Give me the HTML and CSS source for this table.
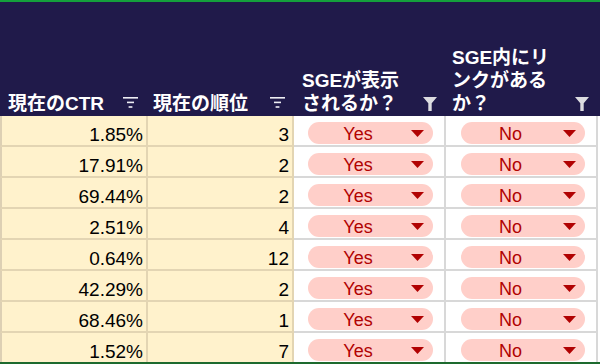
FILE: index.html
```html
<!DOCTYPE html>
<html lang="ja">
<head>
<meta charset="utf-8">
<link rel="stylesheet" href="styles.css">
</head>
<body>
<div class="topbar"></div>
<div class="sheet">
  <div class="head">
    <div class="hcell h1"><span class="htext">現在のCTR</span><svg class="sorticon" width="15" height="11" viewBox="0 0 15 11"><rect x="0" y="0" width="15" height="1.6"/><rect x="4" y="4.6" width="7" height="1.6"/><rect x="5.6" y="9.2" width="3.8" height="1.6"/></svg></div>
    <div class="hcell h2"><span class="htext">現在の順位</span><svg class="sorticon" width="15" height="11" viewBox="0 0 15 11"><rect x="0" y="0" width="15" height="1.6"/><rect x="4" y="4.6" width="7" height="1.6"/><rect x="5.6" y="9.2" width="3.8" height="1.6"/></svg></div>
    <div class="hcell h3"><span class="htext">SGEが表示<br>されるか？</span><svg class="funnel" width="14" height="14" viewBox="0 0 14 14"><path d="M0 0H14L8.7 6.3V14H5.3V6.3Z"/></svg></div>
    <div class="hcell h4"><span class="htext">SGE内にリ<br>ンクがある<br>か？</span><svg class="funnel" width="14" height="14" viewBox="0 0 14 14"><path d="M0 0H14L8.7 6.3V14H5.3V6.3Z"/></svg></div>
  </div>
  <div class="rows">
    <div class="row"><div class="c num first">1.85%</div><div class="c num">3</div><div class="c sel"><div class="pill"><span class="pt">Yes</span><svg class="arr" width="13" height="7" viewBox="0 0 13 7"><path d="M0 0H13L6.5 7Z"/></svg></div></div><div class="c sel"><div class="pill"><span class="pt">No</span><svg class="arr" width="13" height="7" viewBox="0 0 13 7"><path d="M0 0H13L6.5 7Z"/></svg></div></div></div>
    <div class="row"><div class="c num first">17.91%</div><div class="c num">2</div><div class="c sel"><div class="pill"><span class="pt">Yes</span><svg class="arr" width="13" height="7" viewBox="0 0 13 7"><path d="M0 0H13L6.5 7Z"/></svg></div></div><div class="c sel"><div class="pill"><span class="pt">No</span><svg class="arr" width="13" height="7" viewBox="0 0 13 7"><path d="M0 0H13L6.5 7Z"/></svg></div></div></div>
    <div class="row"><div class="c num first">69.44%</div><div class="c num">2</div><div class="c sel"><div class="pill"><span class="pt">Yes</span><svg class="arr" width="13" height="7" viewBox="0 0 13 7"><path d="M0 0H13L6.5 7Z"/></svg></div></div><div class="c sel"><div class="pill"><span class="pt">No</span><svg class="arr" width="13" height="7" viewBox="0 0 13 7"><path d="M0 0H13L6.5 7Z"/></svg></div></div></div>
    <div class="row"><div class="c num first">2.51%</div><div class="c num">4</div><div class="c sel"><div class="pill"><span class="pt">Yes</span><svg class="arr" width="13" height="7" viewBox="0 0 13 7"><path d="M0 0H13L6.5 7Z"/></svg></div></div><div class="c sel"><div class="pill"><span class="pt">No</span><svg class="arr" width="13" height="7" viewBox="0 0 13 7"><path d="M0 0H13L6.5 7Z"/></svg></div></div></div>
    <div class="row"><div class="c num first">0.64%</div><div class="c num">12</div><div class="c sel"><div class="pill"><span class="pt">Yes</span><svg class="arr" width="13" height="7" viewBox="0 0 13 7"><path d="M0 0H13L6.5 7Z"/></svg></div></div><div class="c sel"><div class="pill"><span class="pt">No</span><svg class="arr" width="13" height="7" viewBox="0 0 13 7"><path d="M0 0H13L6.5 7Z"/></svg></div></div></div>
    <div class="row"><div class="c num first">42.29%</div><div class="c num">2</div><div class="c sel"><div class="pill"><span class="pt">Yes</span><svg class="arr" width="13" height="7" viewBox="0 0 13 7"><path d="M0 0H13L6.5 7Z"/></svg></div></div><div class="c sel"><div class="pill"><span class="pt">No</span><svg class="arr" width="13" height="7" viewBox="0 0 13 7"><path d="M0 0H13L6.5 7Z"/></svg></div></div></div>
    <div class="row"><div class="c num first">68.46%</div><div class="c num">1</div><div class="c sel"><div class="pill"><span class="pt">Yes</span><svg class="arr" width="13" height="7" viewBox="0 0 13 7"><path d="M0 0H13L6.5 7Z"/></svg></div></div><div class="c sel"><div class="pill"><span class="pt">No</span><svg class="arr" width="13" height="7" viewBox="0 0 13 7"><path d="M0 0H13L6.5 7Z"/></svg></div></div></div>
    <div class="row"><div class="c num first">1.52%</div><div class="c num">7</div><div class="c sel"><div class="pill"><span class="pt">Yes</span><svg class="arr" width="13" height="7" viewBox="0 0 13 7"><path d="M0 0H13L6.5 7Z"/></svg></div></div><div class="c sel"><div class="pill"><span class="pt">No</span><svg class="arr" width="13" height="7" viewBox="0 0 13 7"><path d="M0 0H13L6.5 7Z"/></svg></div></div></div>
  </div>
</div>
<div class="bottombar"></div>
</body>
</html>
```
FILE: styles.css
```css
* { box-sizing: border-box; }
html, body {
  margin: 0;
  padding: 0;
  width: 600px;
  height: 364px;
  overflow: hidden;
  background: #ffffff;
  font-family: "Liberation Sans", Arial, "Noto Sans CJK JP", sans-serif;
}
.topbar {
  height: 2px;
  background: #14a03c;
}
.sheet {
  height: 360px;
  overflow: hidden;
}
.head {
  display: grid;
  grid-template-columns: 148px 146px 152px 152px 2px;
  height: 114px;
  background: #201a4a;
}
.hcell {
  display: flex;
  justify-content: space-between;
  align-items: flex-end;
  padding-bottom: 1px;
}
.htext {
  color: #ffffff;
  font-weight: bold;
  font-size: 19px;
  line-height: 23px;
  white-space: nowrap;
}
.h1 { padding-left: 8px; padding-right: 10px; }
.h2 { padding-left: 5px; padding-right: 9px; }
.h3 { padding-left: 8px; padding-right: 9px; }
.h4 { padding-left: 6px; padding-right: 9px; }
.sorticon {
  fill: #eeeef4;
  margin-bottom: 7px;
  flex: none;
}
.funnel {
  fill: #dcdce0;
  margin-bottom: 4px;
  flex: none;
}
.rows {
  display: flex;
  flex-direction: column;
}
.row {
  display: grid;
  grid-template-columns: 148px 146px 152px 152px;
  height: 31px;
  flex: none;
}
.c {
  border-right: 2px solid #d8d8d8;
  border-bottom: 2px solid #d8d8d8;
  height: 31px;
}
.num {
  background: #fff2cc;
  border-color: #e3d5b3;
  display: flex;
  justify-content: flex-end;
  align-items: flex-end;
  padding-right: 3px;
  font-size: 19px;
  line-height: 20px;
  color: #000000;
}
.num.first {
  border-left: 2px solid #ddd0b4;
}
.sel {
  background: #ffffff;
  padding-top: 6px;
  padding-left: 14px;
}
.pill {
  width: 125px;
  height: 22px;
  border-radius: 11px;
  background: #ffcfc9;
  display: flex;
  align-items: center;
  padding-right: 9px;
}
.sel + .sel { padding-left: 15px; }
.sel + .sel .pill { width: 124px; }
.pt {
  flex: 1;
  text-align: center;
  color: #b10202;
  font-size: 18px;
  line-height: 19px;
  padding-top: 3px;
  margin-right: 3px;
}
.arr {
  fill: #b10202;
  flex: none;
  margin-top: 1px;
}
.bottombar {
  height: 2px;
  background: #1d6a2e;
}
```
